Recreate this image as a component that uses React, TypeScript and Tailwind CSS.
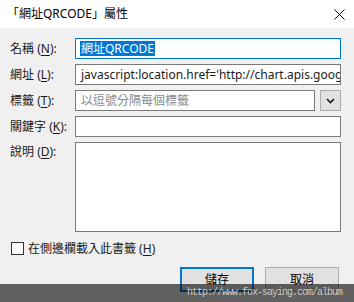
import React from "react";

const font = {
  fontFamily: '"Noto Sans", "Noto Sans CJK TC", sans-serif',
};

const Label: React.FC<{ text: string; k: string; top?: boolean }> = ({ text, k, top }) => (
  <div className={`text-[12px] text-[#1a1a1a] whitespace-nowrap ${top ? "pt-[1px]" : "flex items-center"}`}>
    {text} (<span className="underline underline-offset-2">{k}</span>):
  </div>
);

export default function App() {
  return (
    <div
      className="relative w-[354px] h-[302px] overflow-hidden flex flex-col bg-[#f0f0f0] select-none"
      style={font}
    >
      {/* title bar */}
      <div className="h-[28px] bg-white flex items-center justify-between pl-[7px] pr-[9px] shrink-0">
        <span className="text-[12px] text-black leading-none">「網址QRCODE」屬性</span>
        <svg width="11" height="11" viewBox="0 0 11 11" className="text-black">
          <path d="M0.5 0.5 L10.5 10.5 M10.5 0.5 L0.5 10.5" stroke="currentColor" strokeWidth="1" />
        </svg>
      </div>

      {/* form */}
      <div className="flex flex-col pl-[10px] pr-[13px] pt-[10px]">
        <div className="grid grid-cols-[65px_1fr] gap-y-[5px]">
          <Label text="名稱" k="N" />
          <div className="h-[21px] border border-[#0078d7] bg-white flex items-center pl-[4px] text-[12px]">
            <span className="bg-[#0078d7] text-white leading-[15px] px-[1px]">網址QRCODE</span>
          </div>

          <Label text="網址" k="L" />
          <div className="h-[21px] border border-[#7a7a7a] bg-white flex items-center pl-[5px] text-[12px] text-[#1a1a1a] overflow-hidden whitespace-nowrap">
            <span className="shrink-0">javascript:location.href='http://chart.apis.goog</span>
          </div>

          <Label text="標籤" k="T" />
          <div className="flex gap-[5px]">
            <div className="flex-1 h-[21px] border border-[#7a7a7a] bg-white flex items-center pl-[5px] text-[12px] text-[#8a8a8a]">
              以逗號分隔每個標籤
            </div>
            <div className="w-[21px] h-[21px] bg-[#e1e1e1] border border-[#adadad] flex items-center justify-center">
              <svg width="9" height="6" viewBox="0 0 9 6">
                <path d="M1 1 L4.5 4.5 L8 1" fill="none" stroke="#1a1a1a" strokeWidth="1.6" />
              </svg>
            </div>
          </div>

          <Label text="關鍵字" k="K" />
          <div className="h-[21px] border border-[#7a7a7a] bg-white" />

          <Label text="說明" k="D" top />
          <div className="h-[90px] border border-[#7a7a7a] bg-white" />
        </div>

        <label className="flex items-center gap-[4px] mt-[10px] pl-[1px] h-[13px] text-[12px] leading-none text-[#1a1a1a]">
          <span className="w-[13px] h-[13px] border border-[#333333] bg-white shrink-0" />
          <span>
            在側邊欄載入此書籤 (<span className="underline underline-offset-2">H</span>)
          </span>
        </label>

        <div className="flex justify-end gap-[11px] mt-[12px] pr-[2px]">
          <button className="w-[74px] h-[25px] bg-[#e1e1e1] border-2 border-[#0078d7] text-[12px] leading-none text-black">
            儲存
          </button>
          <button className="w-[74px] h-[25px] bg-[#e1e1e1] border border-[#adadad] text-[12px] leading-none text-black">
            取消
          </button>
        </div>
      </div>

      {/* watermark */}
      <div className="absolute left-0 right-0 bottom-0 h-[18px] bg-black/60 flex items-center justify-end pr-[12px]">
        <span
          className="text-[10px] tracking-[-1px] text-[#c8c8c8] leading-none"
          style={{ fontFamily: '"Liberation Mono", monospace' }}
        >
          http://www.fox-saying.com/album
        </span>
      </div>
    </div>
  );
}
